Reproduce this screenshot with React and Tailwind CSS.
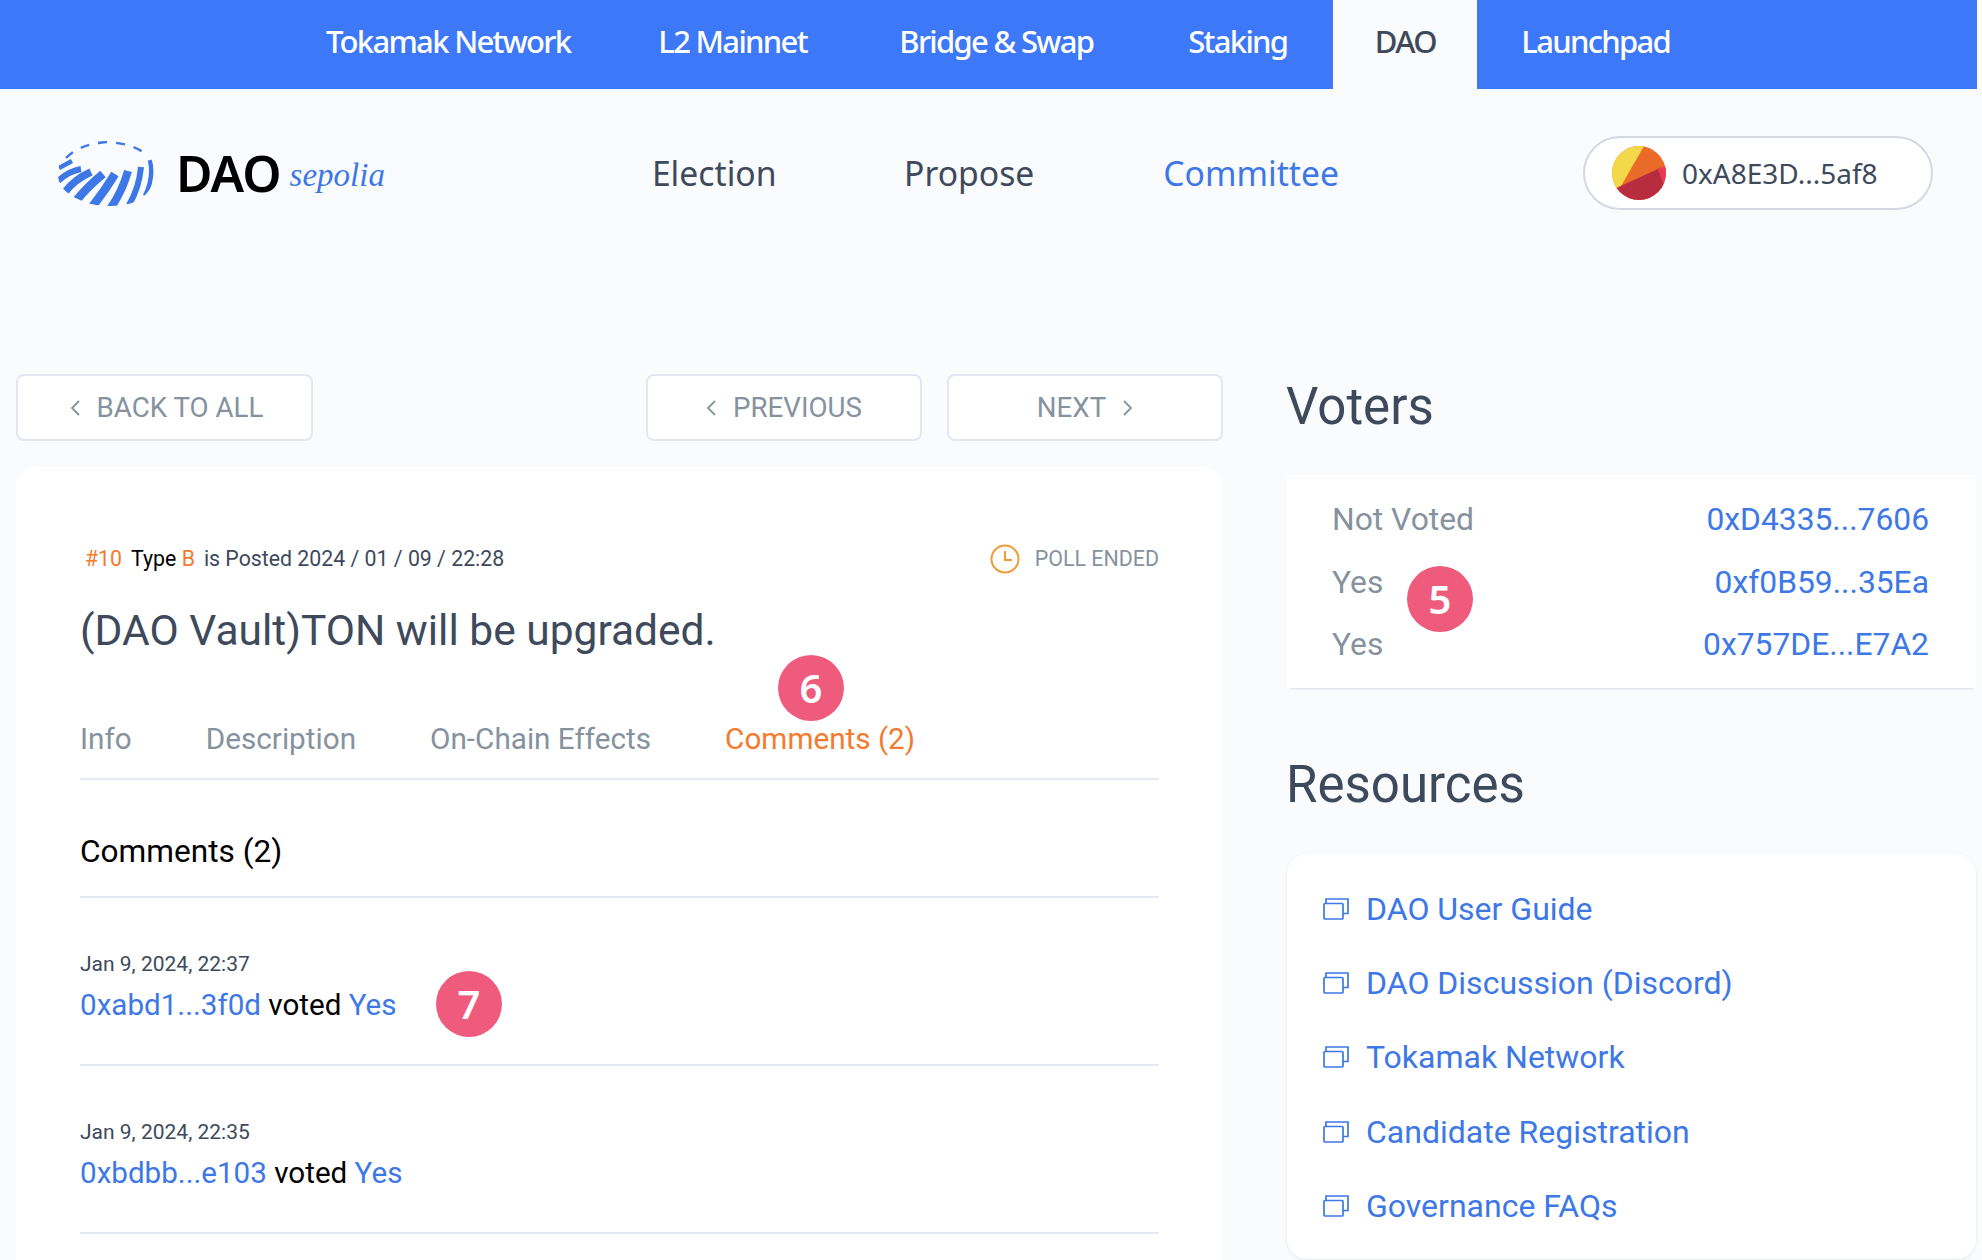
const navItems = ["Tokamak Network", "L2 Mainnet", "Bridge & Swap", "Staking"];

function Logo() {
  return (
    <svg width="96" height="66" viewBox="0 0 96 66" className="shrink-0">
      <defs>
        <clipPath id="logo-clip">
          <path d="M0 34 C0 22 6 10 14 6 C30 -1 66 -1 82 6 C92 11 96 22 96 34 C96 50 84 62 66 65 C50 67 34 66 22 60 C8 54 0 46 0 34 Z" />
        </clipPath>
      </defs>
      <g clipPath="url(#logo-clip)" fill="none" stroke="#3d78e6">
        <path d="M1 28 L14 21" strokeWidth="4.5" />
        <path d="M0 41 Q11 31 23 29" strokeWidth="6" />
        <path d="M7 52 Q17 39 33 32" strokeWidth="7.5" />
        <path d="M18 61 Q29 47 45 34" strokeWidth="8.5" />
        <path d="M34 67 Q46 52 57 34" strokeWidth="8.5" />
        <path d="M52 69 Q64 52 70 31" strokeWidth="8" />
        <path d="M71 65 Q81 48 83 27" strokeWidth="6" />
        <path d="M87 56 Q96 38 92 20" strokeWidth="4.5" />
        <path d="M8 18 Q22 4 48 2 Q76 3 90 16" strokeWidth="2.4" strokeDasharray="9 9" />
      </g>
    </svg>
  );
}

function Avatar() {
  return (
    <svg width="54" height="54" viewBox="0 0 54 54" className="shrink-0">
      <defs>
        <clipPath id="avatar-clip"><circle cx="27" cy="27" r="27" /></clipPath>
      </defs>
      <g clipPath="url(#avatar-clip)">
        <rect width="54" height="54" fill="#ea6a28" />
        <polygon points="0,0 32,0 8,42 0,44" fill="#f3d84a" />
        <polygon points="46,22 60,20 60,60 52,60" fill="#ea3a54" />
        <polygon points="0,44 46,23 54,46 54,54 0,54" fill="#b82c40" />
      </g>
    </svg>
  );
}

function Chevron({ dir }) {
  return (
    <svg width="11" height="18" viewBox="0 0 11 18" fill="none" stroke="#86929d" strokeWidth="1.8" className="shrink-0">
      <path d={dir === "left" ? "M9 2 L2 9 L9 16" : "M2 2 L9 9 L2 16"} />
    </svg>
  );
}

function Clock() {
  return (
    <svg width="30" height="30" viewBox="0 0 30 30" fill="none" stroke="#f19a3a" strokeWidth="2" className="shrink-0">
      <circle cx="15" cy="15" r="13.5" />
      <path d="M15 7 V16 H22" />
    </svg>
  );
}

function WindowsIcon() {
  return (
    <svg width="26" height="22" viewBox="0 0 26 22" fill="none" stroke="#3d78e6" strokeWidth="1.7" className="shrink-0">
      <rect x="1" y="5.5" width="19" height="15.5" rx="1" />
      <path d="M3 5.5 V1 H25 V15.5 H20" />
    </svg>
  );
}

function Badge({ n, className }) {
  return (
    <div className={`absolute w-[66px] h-[66px] rounded-full bg-[#ee5b7c] text-white flex items-center justify-center text-[40px] font-semibold font-['Noto_Sans',sans-serif] ${className}`}>
      {n}
    </div>
  );
}

function NavButton({ children, className }) {
  return (
    <div className={`h-[67px] bg-white border-2 border-[#e4e7f1] rounded-lg flex items-center justify-center gap-[16px] text-[27.7px] text-[#86929d] ${className}`}>
      {children}
    </div>
  );
}

function Comment({ date, addr }) {
  return (
    <div className="h-[168px] border-b-2 border-[#e4e8f0] pt-[51px]">
      <div className="text-[21px] leading-[30px] text-[#3e495c]">{date}</div>
      <div className="mt-[8px] text-[29.6px] leading-[36px] text-black">
        <span className="text-[#3d78e6]">{addr}</span> voted <span className="text-[#3d78e6]">Yes</span>
      </div>
    </div>
  );
}

export default function App() {
  return (
    <div className="relative w-[1982px] h-[1260px] overflow-hidden bg-[#fafbfd] font-['Roboto',sans-serif]">
      <header className="h-[89px] bg-[#3d78f8] flex items-stretch pl-[326px] mr-[5px] pb-[6px] font-['Noto_Sans',sans-serif] font-medium text-[31px] text-white tracking-[-1.7px]">
        {navItems.map((t, i) => (
          <div key={t} className={`flex items-center ${["mr-[88px]", "mr-[92.5px]", "mr-[95px]", "mr-[46px]"][i]}`}>{t}</div>
        ))}
        <div className="w-[144px] -mb-[6px] pb-[6px] bg-[#fafbfd] text-[#3e495c] flex items-center justify-center">DAO</div>
        <div className="flex items-center ml-[44px]">Launchpad</div>
      </header>

      <div className="h-[118px] mt-[25px] flex items-center pl-[58px] pr-[49px]">
        <Logo />
        <div className="ml-[22px] font-['Noto_Sans',sans-serif] text-[50px] font-semibold text-black tracking-[-1px]">DAO</div>
        <div className="ml-[9px] mt-[6px] font-['Liberation_Serif',serif] italic text-[33px] text-[#3d78e6]">sepolia</div>
        <div className="ml-[267px] font-['Noto_Sans',sans-serif] text-[33.7px] text-[#3e495c]">Election</div>
        <div className="ml-[127.5px] font-['Noto_Sans',sans-serif] text-[33.7px] text-[#3e495c]">Propose</div>
        <div className="ml-[129px] font-['Noto_Sans',sans-serif] text-[33.7px] text-[#3d78e6]">Committee</div>
        <div className="ml-auto w-[350px] h-[74px] rounded-full bg-white border-2 border-[#d5d8e2] flex items-center pl-[27px] gap-[16px] font-['Noto_Sans',sans-serif] text-[28px] text-[#3e495c]">
          <Avatar />
          <span>0xA8E3D...5af8</span>
        </div>
      </div>

      <main className="mt-[142px] flex items-start pl-[16px]">
        <section className="w-[1207px]">
          <div className="flex">
            <NavButton className="w-[297px] pl-[4px]"><Chevron dir="left" />BACK TO ALL</NavButton>
            <NavButton className="w-[276px] ml-auto"><Chevron dir="left" />PREVIOUS</NavButton>
            <NavButton className="w-[276px] ml-[25px]">NEXT<Chevron dir="right" /></NavButton>
          </div>
          <div className="mt-[26px] h-[900px] bg-white rounded-[20px] px-[64px] pt-[74px]">
            <div className="flex items-center justify-between h-[36px]">
              <div className="text-[21.3px] text-[#3e495c] pl-[5px]">
                <span className="text-[#f47a2e]">#10</span>
                <span className="text-black ml-[9px]">Type </span>
                <span className="text-[#f47a2e]">B</span>
                <span className="ml-[9px]">is Posted 2024 / 01 / 09 / 22:28</span>
              </div>
              <div className="flex items-center gap-[15px] text-[21.4px] text-[#86929d]">
                <Clock />POLL ENDED
              </div>
            </div>
            <h1 className="mt-[26px] text-[42.5px] leading-[56px] text-[#3e495c]">(DAO Vault)TON will be upgraded.</h1>
            <div className="mt-[57px] h-[64px] border-b-2 border-[#e4e8f0] flex gap-[74px] text-[29.7px] leading-[46px] text-[#86929d]">
              <div>Info</div>
              <div>Description</div>
              <div>On-Chain Effects</div>
              <div className="text-[#f47a2e]">Comments (2)</div>
            </div>
            <div className="h-[118px] pt-[28px] border-b-2 border-[#e4e8f0] flex items-center text-[31.6px] text-black">Comments (2)</div>
            <Comment date="Jan 9, 2024, 22:37" addr="0xabd1...3f0d" />
            <Comment date="Jan 9, 2024, 22:35" addr="0xbdbb...e103" />
          </div>
        </section>

        <aside className="ml-[64px] w-[689px]">
          <h2 className="-ml-[1px] h-[67px] flex items-center text-[51px] text-[#3e495c]">Voters</h2>
          <div className="mt-[34px] h-[213px] bg-white shadow-[0_3px_3px_-3px_rgba(60,70,100,0.3)] pl-[45px] pr-[47px] pt-[14px] text-[31.8px]">
            {[["Not Voted", "0xD4335...7606"], ["Yes", "0xf0B59...35Ea"], ["Yes", "0x757DE...E7A2"]].map(([a, b], i) => (
              <div key={i} className="h-[62.5px] flex items-center justify-between">
                <span className="text-[#86929d]">{a}</span>
                <span className="text-[#3d78e6]">{b}</span>
              </div>
            ))}
          </div>
          <h2 className="-ml-[1px] mt-[64px] h-[67px] flex items-center text-[51px] text-[#3e495c]">Resources</h2>
          <div className="mt-[35px] h-[405px] bg-white rounded-[20px] shadow-[0_1px_3px_rgba(60,70,100,0.12)] pl-[36px] pt-[18px] text-[32px] text-[#3d78e6]">
            {["DAO User Guide", "DAO Discussion (Discord)", "Tokamak Network", "Candidate Registration", "Governance FAQs"].map((t) => (
              <div key={t} className="h-[74.2px] flex items-center gap-[17px]">
                <WindowsIcon />
                <span>{t}</span>
              </div>
            ))}
          </div>
        </aside>
      </main>

      <Badge n="5" className="left-[1407px] top-[566px]" />
      <Badge n="6" className="left-[778px] top-[655px]" />
      <Badge n="7" className="left-[436px] top-[971px]" />
    </div>
  );
}
